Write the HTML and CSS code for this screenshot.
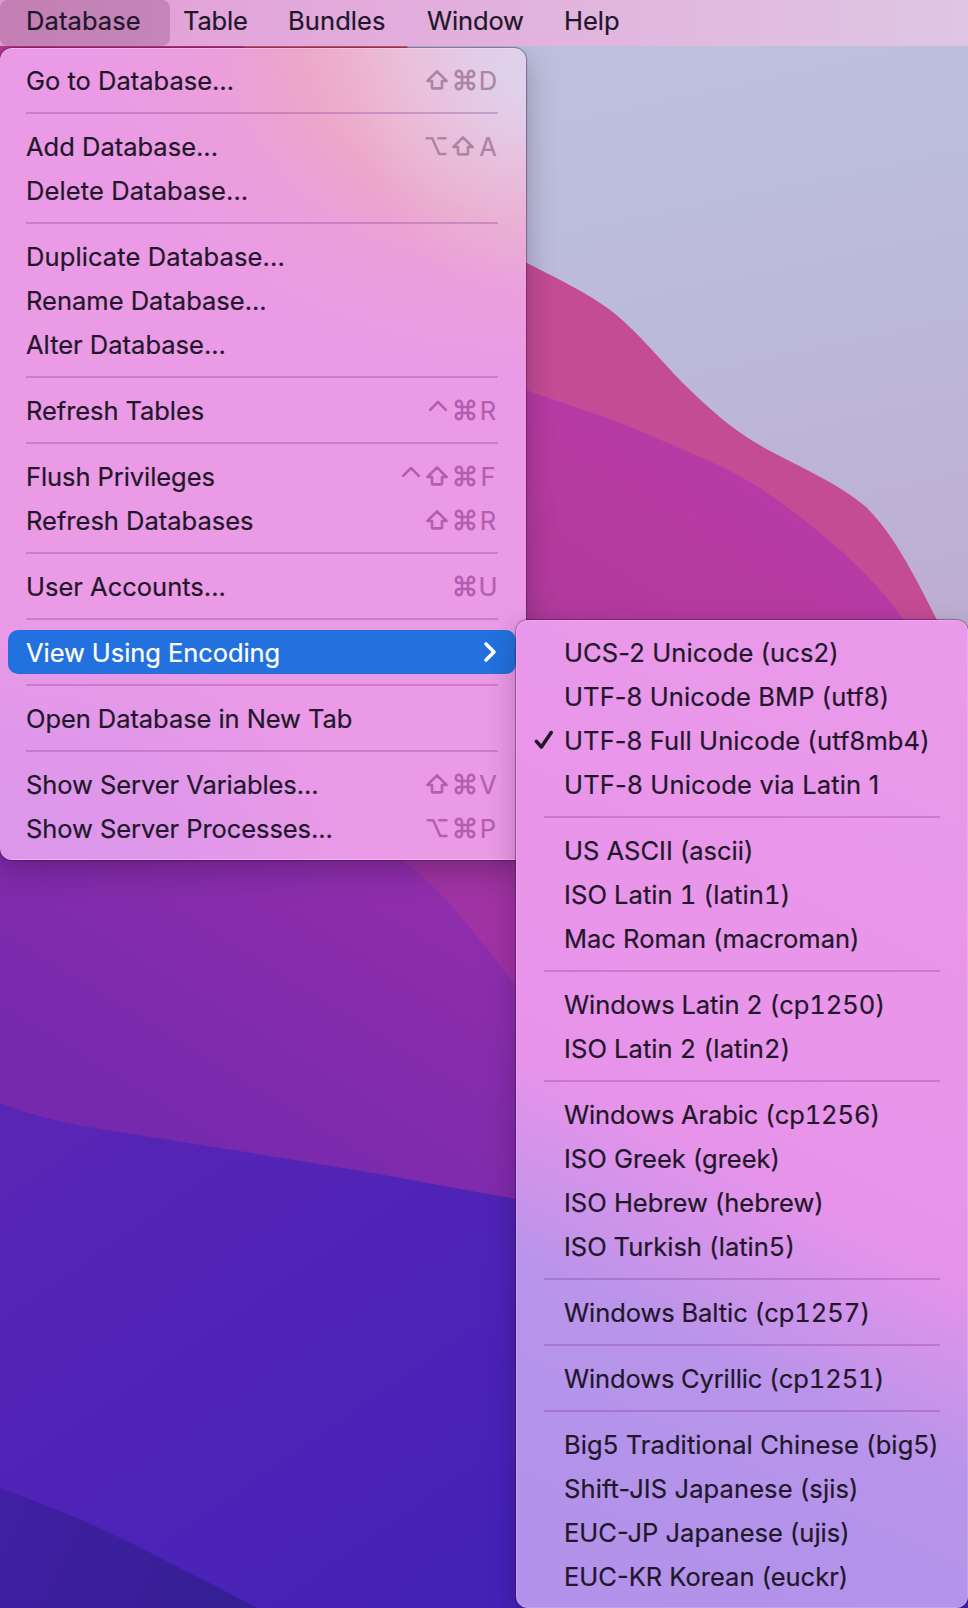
FILE: index.html
```html
<!DOCTYPE html>
<html lang="en">
<head>
<meta charset="utf-8">
<title>Database menu</title>
<link rel="stylesheet" href="styles.css">
</head>
<body>
<svg class="defs" width="0" height="0" aria-hidden="true">
  <symbol id="cmd" viewBox="0 0 22 22"><path d="M8 8V4.9A3.1 3.1 0 1 0 4.9 8H17.1A3.1 3.1 0 1 0 14 4.9V17.1A3.1 3.1 0 1 0 17.1 14H4.9A3.1 3.1 0 1 0 8 17.1Z"/></symbol>
  <symbol id="shift" viewBox="0 0 22 22"><path d="M11 2.4L20.6 12H16V18.2Q16 19.4 14.8 19.4H7.2Q6 19.4 6 18.2V12H1.4Z"/></symbol>
  <symbol id="opt" viewBox="0 0 22 22"><path d="M1.6 3.2H7.2L14.2 19H20.4M13.4 3.2H20.4"/></symbol>
  <symbol id="ctrl" viewBox="0 0 22 22"><path d="M4.2 10.8L12 3L19.8 10.8"/></symbol>
</svg>
<div class="desktop">
  <svg class="wallpaper" viewBox="0 0 968 1608" aria-hidden="true">
    <defs>
      <linearGradient id="sky" gradientUnits="userSpaceOnUse" x1="760" y1="30" x2="880" y2="600"><stop offset="0" stop-color="#bdc0dd"/><stop offset=".45" stop-color="#bcbada"/><stop offset="1" stop-color="#beafd2"/></linearGradient>
      <linearGradient id="plum" gradientUnits="userSpaceOnUse" x1="800" y1="480" x2="660" y2="700"><stop offset="0" stop-color="#b73aa8"/><stop offset=".5" stop-color="#b63b9f"/><stop offset="1" stop-color="#b03a9c"/></linearGradient>
      <linearGradient id="violet" gradientUnits="userSpaceOnUse" x1="440" y1="880" x2="250" y2="1190"><stop offset="0" stop-color="#912eac"/><stop offset="1" stop-color="#7629ad"/></linearGradient>
      <linearGradient id="blue" gradientUnits="userSpaceOnUse" x1="60" y1="1110" x2="400" y2="1600"><stop offset="0" stop-color="#5925b5"/><stop offset="1" stop-color="#4621b8"/></linearGradient>
      <linearGradient id="navy" gradientUnits="userSpaceOnUse" x1="0" y1="1500" x2="230" y2="1608"><stop offset="0" stop-color="#411fa3"/><stop offset="1" stop-color="#341f94"/></linearGradient>
    </defs>
    <rect width="968" height="1608" fill="url(#sky)"/>
    <path fill="#c9566c" d="M0 0H380L408 48L526 262Q408 300 0 200Z"/>
    <path fill="#c44c95" d="M300 200C400 210 470 235 526 262.5C552 276 578 288 600 303C632 323 660 361 690 390C712 411 731 428 756 443C788 462 838 482 866 507C892 532 914 574 938 622V1608H0V200Z"/>
    <path fill="#b8368c" d="M0 0H210L245 48L300 300H0Z"/>
    <path fill="url(#plum)" d="M300 340L526 390C565 404 605 416 640 431C680 449 715 461 750 482C795 510 865 564 904 620L968 720V1000H300Z"/>
    <path fill="#a033a3" d="M380 840H560V1020H380Z"/>
    <path fill="url(#violet)" d="M0 800H350L402 860C443 889 482 942 516 986V1250H0Z"/>
    <path fill="url(#blue)" d="M0 1103C42 1119 75 1125 107 1130C200 1145 330 1165 384 1175L516 1199L968 1260V1608H0Z"/>
    <path fill="url(#navy)" d="M0 1488C65 1512 95 1525 143 1549L258 1608H0Z"/>
  </svg>

  <nav class="menubar">
    <span class="bar-item bar-item--open t-db">Database</span>
    <span class="bar-item t-table">Table</span>
    <span class="bar-item t-bundles">Bundles</span>
    <span class="bar-item t-window">Window</span>
    <span class="bar-item">Help</span>
  </nav>

  <div class="menu menu--database">
    <div class="item"><span class="label">Go to Database…</span><span class="keys keys--muted"><svg><use href="#shift"/></svg><svg><use href="#cmd"/></svg><b>D</b></span></div>
    <hr>
    <div class="item"><span class="label">Add Database...</span><span class="keys keys--muted keys--tight"><svg><use href="#opt"/></svg><svg><use href="#shift"/></svg><b>A</b></span></div>
    <div class="item"><span class="label wide">Delete Database...</span></div>
    <hr>
    <div class="item"><span class="label wide">Duplicate Database...</span></div>
    <div class="item"><span class="label">Rename Database...</span></div>
    <div class="item"><span class="label">Alter Database...</span></div>
    <hr>
    <div class="item"><span class="label narrow">Refresh Tables</span><span class="keys"><svg><use href="#ctrl"/></svg><svg><use href="#cmd"/></svg><b>R</b></span></div>
    <hr>
    <div class="item"><span class="label narrow">Flush Privileges</span><span class="keys"><svg><use href="#ctrl"/></svg><svg><use href="#shift"/></svg><svg><use href="#cmd"/></svg><b>F</b></span></div>
    <div class="item"><span class="label">Refresh Databases</span><span class="keys"><svg><use href="#shift"/></svg><svg><use href="#cmd"/></svg><b>R</b></span></div>
    <hr>
    <div class="item"><span class="label">User Accounts...</span><span class="keys"><svg><use href="#cmd"/></svg><b>U</b></span></div>
    <hr>
    <div class="item item--active"><span class="label narrow">View Using Encoding</span><svg class="chevron" viewBox="0 0 14 22"><path d="M3 3L11 11L3 19"/></svg></div>
    <hr>
    <div class="item"><span class="label narrow">Open Database in New Tab</span></div>
    <hr>
    <div class="item"><span class="label narrow">Show Server Variables...</span><span class="keys"><svg><use href="#shift"/></svg><svg><use href="#cmd"/></svg><b>V</b></span></div>
    <div class="item"><span class="label narrow">Show Server Processes...</span><span class="keys"><svg><use href="#opt"/></svg><svg><use href="#cmd"/></svg><b>P</b></span></div>
  </div>

  <div class="menu menu--encoding">
    <div class="item"><span class="label wide">UCS-2 Unicode (ucs2)</span></div>
    <div class="item"><span class="label wide">UTF-8 Unicode BMP (utf8)</span></div>
    <div class="item item--checked"><svg class="check" viewBox="0 0 20 20"><path d="M2.4 11.4L7.4 17L17.2 2.6"/></svg><span class="label wide">UTF-8 Full Unicode (utf8mb4)</span></div>
    <div class="item"><span class="label wider">UTF-8 Unicode via Latin 1</span></div>
    <hr>
    <div class="item"><span class="label">US ASCII (ascii)</span></div>
    <div class="item"><span class="label tabular wide">ISO Latin 1 (latin1)</span></div>
    <div class="item"><span class="label">Mac Roman (macroman)</span></div>
    <hr>
    <div class="item"><span class="label tabular narrow">Windows Latin 2 (cp1250)</span></div>
    <div class="item"><span class="label tabular wide">ISO Latin 2 (latin2)</span></div>
    <hr>
    <div class="item"><span class="label tabular narrower">Windows Arabic (cp1256)</span></div>
    <div class="item"><span class="label">ISO Greek (greek)</span></div>
    <div class="item"><span class="label">ISO Hebrew (hebrew)</span></div>
    <div class="item"><span class="label tabular">ISO Turkish (latin5)</span></div>
    <hr>
    <div class="item"><span class="label tabular narrow">Windows Baltic (cp1257)</span></div>
    <hr>
    <div class="item"><span class="label tabular narrower">Windows Cyrillic (cp1251)</span></div>
    <hr>
    <div class="item"><span class="label wide">Big5 Traditional Chinese (big5)</span></div>
    <div class="item"><span class="label wide">Shift-JIS Japanese (sjis)</span></div>
    <div class="item"><span class="label">EUC-JP Japanese (ujis)</span></div>
    <div class="item"><span class="label">EUC-KR Korean (euckr)</span></div>
  </div>
</div>
</body>
</html>
```
FILE: styles.css
```css
* { box-sizing: border-box; }
body {
  margin: 0;
  font-family: Inter, "Liberation Sans", sans-serif;
  font-size: 25.5px;
  color: #21162a;
  -webkit-text-stroke: .2px currentColor;
}
.defs { position: absolute; }
.desktop {
  position: relative;
  width: 968px;
  height: 1608px;
  overflow: hidden;
}
.wallpaper {
  position: absolute;
  inset: 0;
  width: 100%;
  height: 100%;
}
.menubar {
  position: relative;
  z-index: 2;
  display: flex;
  height: 46px;
  background: linear-gradient(90deg, #e09ad2 0, #e3a4da 190px, #e2b1dd 500px, #dfc6e4 100%);
}
.bar-item {
  height: 46px;
  padding-top: 1px;
  line-height: 40px;
  white-space: nowrap;
}
.bar-item--open {
  border-radius: 8px;
  background: rgba(80, 20, 60, .2);
}
.t-db { width: 170px; padding-left: 26px; margin-right: 13px; letter-spacing: .1px; }
.t-table { width: 105px; letter-spacing: -.2px; }
.t-bundles { width: 139px; letter-spacing: .1px; }
.t-window { width: 137px; letter-spacing: -.15px; }

.menu {
  position: absolute;
  padding: 10px;
  border-radius: 12px;
}
.menu--database {
  left: 0;
  top: 48px;
  width: 526px;
  height: 812px;
  padding: 10px 10px 10px 8px;
  background:
    radial-gradient(ellipse 170px 210px at 100% 40px, rgba(222, 210, 236, .8) 0, rgba(230, 196, 228, .5) 50%, rgba(234, 176, 222, 0) 100%),
    radial-gradient(ellipse 440px 330px at 100% 0, #dfd6ed 0, #e1cfe7 12%, #ebc0da 25%, #edb3cf 38%, #eca6cb 52%, rgba(236, 160, 216, .75) 70%, rgba(234, 153, 229, 0) 100%),
    radial-gradient(ellipse 380px 250px at 0 100%, #db97ea 0, #e097ea 50%, rgba(236, 153, 232, 0) 100%),
    #eb9ae6;
  box-shadow: 0 0 1px 1px rgba(60, 10, 60, .4), 0 10px 30px rgba(20, 0, 30, .28), inset 0 1px 0 rgba(255, 255, 255, .25), inset 0 -1px 0 rgba(255, 255, 255, .3);
}
.menu--encoding {
  left: 516px;
  top: 620px;
  width: 452px;
  height: 988px;
  background: linear-gradient(206deg, #ea9aea 0, #e996ea 30%, #e893ea 54%, #b994ea 71%, #b494ea 80%, #b292ea 100%);
  box-shadow: 0 0 1px 1px rgba(60, 10, 60, .4), 0 10px 30px rgba(20, 0, 30, .26), inset 0 0 0 1px rgba(255, 255, 255, .15);
}
.item {
  display: flex;
  align-items: center;
  justify-content: space-between;
  height: 44px;
  padding: 0 18px;
  border-radius: 10px;
  line-height: 44px;
  white-space: nowrap;
}
.label { padding-top: 1px; }
.wide { letter-spacing: .1px; }
.wider { letter-spacing: .18px; }
.narrow { letter-spacing: -.07px; }
.narrower { letter-spacing: -.12px; }
.tabular { font-variant-numeric: tabular-nums; }
.menu--encoding .item {
  justify-content: flex-start;
  padding: 0 0 0 38px;
}
.menu--encoding .item--checked { padding-left: 8px; }
.check {
  width: 20px;
  height: 20px;
  margin-right: 10px;
  fill: none;
  stroke: #21162a;
  stroke-width: 3.6;
  stroke-linecap: round;
  stroke-linejoin: round;
}
hr {
  height: 2px;
  margin: 10px 18px;
  border: 0;
  background: rgba(125, 40, 135, .27);
}
.item--active {
  width: 508px;
  background: #2371de;
  color: #fff;
}
.chevron {
  width: 14px;
  height: 22px;
  margin-right: 1px;
  fill: none;
  stroke: #fff;
  stroke-width: 3.6;
  stroke-linecap: round;
  stroke-linejoin: round;
}
.keys {
  display: flex;
  align-items: center;
  gap: 5.5px;
  margin-right: -1px;
  color: #b25fb2;
}
.keys--muted { color: #ad84a2; }
.keys svg {
  width: 22px;
  height: 22px;
  fill: none;
  stroke: currentColor;
  stroke-width: 2.6;
  stroke-linecap: round;
  stroke-linejoin: round;
}
.keys b {
  width: 22px;
  margin-left: -4px;
  padding-top: 1px;
  font-weight: 400;
  text-align: center;
}
.keys--tight b { margin-left: -2.5px; }
```
